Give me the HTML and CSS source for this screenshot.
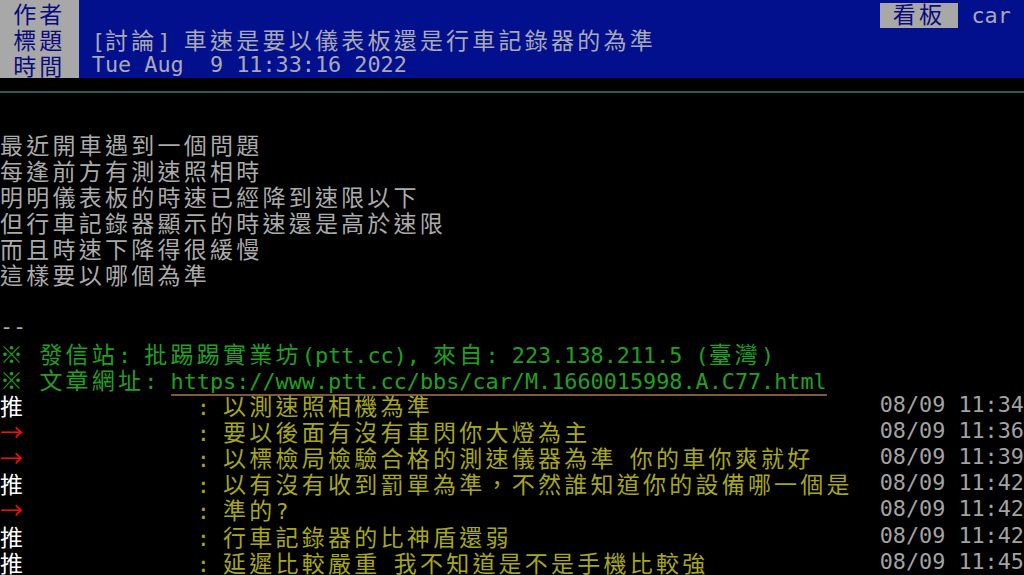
FILE: index.html
```html
<!DOCTYPE html>
<html lang="zh-Hant">
<head>
  <meta charset="UTF-8">
  <meta name="viewport" content="width=device-width, initial-scale=1.0">
  <title>[討論] 車速是要以儀表板還是行車記錄器的為準 - car</title>
  <link rel="stylesheet" href="styles.css">
</head>
<body>
  <div class="screen">
    <!-- article header -->
    <div class="row head">
      <span class="label"> <span class="w">作者</span> </span>
      <span class="board"><span class="label"> <span class="w">看板</span> </span> car </span>
    </div>
    <div class="row head">
      <span class="label"> <span class="w">標題</span> </span>
      <span> [<span class="w">討論</span>] <span class="w">車速是要以儀表板還是行車記錄器的為準</span></span>
    </div>
    <div class="row head">
      <span class="label"> <span class="w">時間</span> </span>
      <span> Tue Aug  9 11:33:16 2022</span>
    </div>
    <div class="row rule"><div class="rule-line"></div></div>
    <div class="row"></div>

    <!-- article body -->
    <div class="row"><span class="w">最近開車遇到一個問題</span></div>
    <div class="row"><span class="w">每逢前方有測速照相時</span></div>
    <div class="row"><span class="w">明明儀表板的時速已經降到速限以下</span></div>
    <div class="row"><span class="w">但行車記錄器顯示的時速還是高於速限</span></div>
    <div class="row"><span class="w">而且時速下降得很緩慢</span></div>
    <div class="row"><span class="w">這樣要以哪個為準</span></div>
    <div class="row"></div>
    <div class="row">--</div>
    <div class="row green"><span class="w">※</span> <span class="w">發信站</span>: <span class="w">批踢踢實業坊</span>(ptt.cc), <span class="w">來自</span>: 223.138.211.5 (<span class="w">臺灣</span>)</div>
    <div class="row green"><span class="w">※</span> <span class="w">文章網址</span>: <span class="url">https://www.ptt.cc/bbs/car/M.1660015998.A.C77.html</span></div>

    <!-- pushes -->
    <div class="row push">
      <span class="tag up w">推</span>
      <span class="msg">             : <span class="w">以測速照相機為準</span></span>
      <span class="time">08/09 11:34</span>
    </div>
    <div class="row push">
      <span class="tag arrow w">→</span>
      <span class="msg">             : <span class="w">要以後面有沒有車閃你大燈為主</span></span>
      <span class="time">08/09 11:36</span>
    </div>
    <div class="row push">
      <span class="tag arrow w">→</span>
      <span class="msg">             : <span class="w">以標檢局檢驗合格的測速儀器為準</span> <span class="w">你的車你爽就好</span></span>
      <span class="time">08/09 11:39</span>
    </div>
    <div class="row push">
      <span class="tag up w">推</span>
      <span class="msg">             : <span class="w">以有沒有收到罰單為準，不然誰知道你的設備哪一個是</span></span>
      <span class="time">08/09 11:42</span>
    </div>
    <div class="row push">
      <span class="tag arrow w">→</span>
      <span class="msg">             : <span class="w">準的</span>?</span>
      <span class="time">08/09 11:42</span>
    </div>
    <div class="row push">
      <span class="tag up w">推</span>
      <span class="msg">             : <span class="w">行車記錄器的比神盾還弱</span></span>
      <span class="time">08/09 11:42</span>
    </div>
    <div class="row push">
      <span class="tag up w">推</span>
      <span class="msg">             : <span class="w">延遲比較嚴重</span> <span class="w">我不知道是不是手機比較強</span></span>
      <span class="time">08/09 11:45</span>
    </div>
  </div>
</body>
</html>
```

FILE: styles.css
```css
:root {
  --col: 13.12px;
  --row: 26.14px;
}
html, body {
  margin: 0;
  background: #000;
}
body {
  overflow: hidden;
}
.screen {
  width: 1024px;
  height: 575px;
  overflow: hidden;
  font-family: "DejaVu Sans Mono", monospace;
  font-size: 21.8px;
  color: #ababab;
}
.row {
  height: var(--row);
  line-height: var(--row);
  white-space: pre;
}
/* full-width characters take two cells */
.w {
  font-family: "Noto Sans CJK TC", "Noto Sans CJK SC", sans-serif;
  font-size: 23px;
  letter-spacing: calc(2 * var(--col) - 23px);
}
.head {
  display: flex;
  background: #02108e;
  color: #a9a9b4;
}
.label {
  background: #a8a8a8;
  color: #0b0b7e;
}
.board {
  margin-left: auto;
}
.rule {
  display: flex;
  align-items: center;
}
.rule-line {
  width: 100%;
  height: 2px;
  margin-top: 1px;
  background: #2b5a58;
}
.green {
  color: #21a021;
}
.url {
  border-bottom: 2px solid #7c5a3b;
}
.push {
  display: flex;
}
.tag {
  width: calc(2 * var(--col));
  letter-spacing: 0;
}
.up {
  color: #fff;
}
.arrow {
  color: #f01010;
}
.msg {
  color: #a6a622;
}
.time {
  margin-left: auto;
  color: #a3a3a3;
}
```
